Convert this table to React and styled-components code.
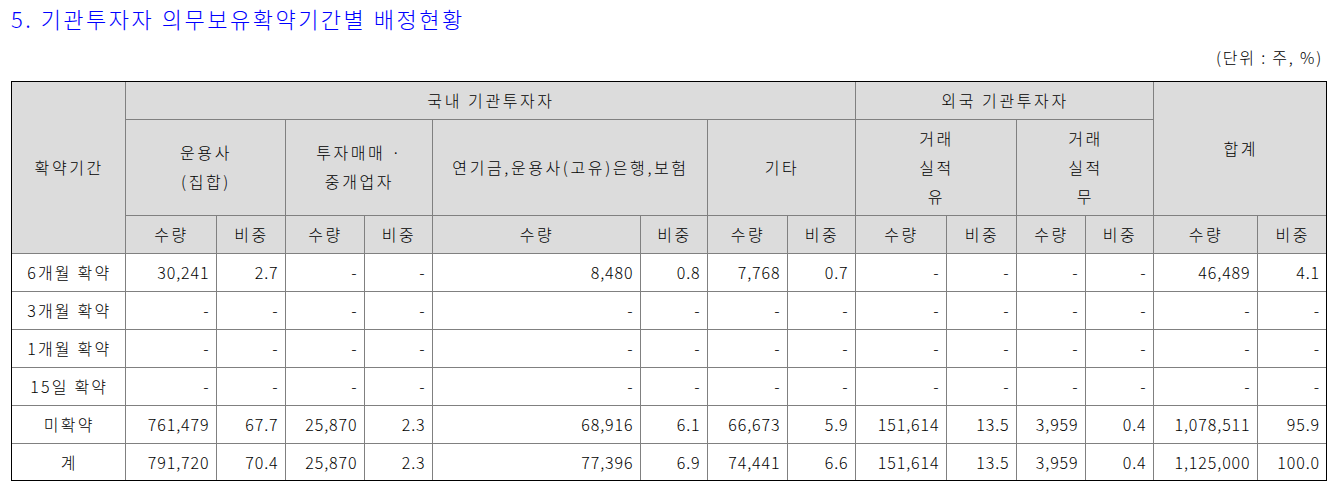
import React from "react";
import styled, { createGlobalStyle } from "styled-components";

const GlobalStyle = createGlobalStyle`
  body {
    margin: 0;
    background: #fff;
    font-family: "Noto Sans CJK KR", "Noto Sans", sans-serif;
    color: #000;
  }
`;

// 열 너비 (px)
const COLS = [113, 91, 69, 79, 68, 208, 67, 80, 68, 91, 70, 69, 68, 104, 69];

const ROWS = [
  ["6개월 확약", "30,241", "2.7", "-", "-", "8,480", "0.8", "7,768", "0.7", "-", "-", "-", "-", "46,489", "4.1"],
  ["3개월 확약", "-", "-", "-", "-", "-", "-", "-", "-", "-", "-", "-", "-", "-", "-"],
  ["1개월 확약", "-", "-", "-", "-", "-", "-", "-", "-", "-", "-", "-", "-", "-", "-"],
  ["15일 확약", "-", "-", "-", "-", "-", "-", "-", "-", "-", "-", "-", "-", "-", "-"],
  ["미확약", "761,479", "67.7", "25,870", "2.3", "68,916", "6.1", "66,673", "5.9", "151,614", "13.5", "3,959", "0.4", "1,078,511", "95.9"],
  ["계", "791,720", "70.4", "25,870", "2.3", "77,396", "6.9", "74,441", "6.6", "151,614", "13.5", "3,959", "0.4", "1,125,000", "100.0"],
];

const SUB_GROUPS = [
  ["운용사", "(집합)"],
  ["투자매매 ·", "중개업자"],
  ["연기금,운용사(고유)은행,보험"],
  ["기타"],
  ["거래", "실적", "유"],
  ["거래", "실적", "무"],
];

const App = () => {
  return (
    <Page>
      <GlobalStyle />
      <Title>5. 기관투자자 의무보유확약기간별 배정현황</Title>
      <Unit>(단위 : 주, %)</Unit>
      <TableBox>
        <Table>
          <colgroup>
            {COLS.map((w, i) => (
              <col key={i} style={{ width: w }} />
            ))}
          </colgroup>
          <thead>
            <HeadRow $h={37}>
              <HeadCell rowSpan={3}>확약기간</HeadCell>
              <HeadCell colSpan={8}>국내 기관투자자</HeadCell>
              <HeadCell colSpan={4}>외국 기관투자자</HeadCell>
              <HeadCell colSpan={2} rowSpan={2}>
                합계
              </HeadCell>
            </HeadRow>
            <HeadRow $h={96}>
              {SUB_GROUPS.map((lines, i) => (
                <HeadCell key={i} colSpan={2} $multi>
                  {lines.map((l, j) => (
                    <React.Fragment key={j}>
                      {j > 0 && <br />}
                      {l}
                    </React.Fragment>
                  ))}
                </HeadCell>
              ))}
            </HeadRow>
            <HeadRow $h={38}>
              {Array.from({ length: 7 }).map((_, i) => (
                <React.Fragment key={i}>
                  <HeadCell>수량</HeadCell>
                  <HeadCell>비중</HeadCell>
                </React.Fragment>
              ))}
            </HeadRow>
          </thead>
          <tbody>
            {ROWS.map((row, r) => (
              <BodyRow key={r} $h={r === ROWS.length - 1 ? 37 : 38}>
                {row.map((v, c) =>
                  c === 0 ? (
                    <LabelCell key={c}>{v}</LabelCell>
                  ) : (
                    <NumCell key={c}>{v}</NumCell>
                  )
                )}
              </BodyRow>
            ))}
          </tbody>
        </Table>
      </TableBox>
    </Page>
  );
};

export default App;

//스타일 영역
const Page = styled.div`
  width: 1316px;
  padding: 4px 0 0 11px;
`;

const Title = styled.h1`
  margin: 0;
  font-size: 22px;
  line-height: 28px;
  font-weight: 300;
  letter-spacing: 2.5px;
  color: #0000ff;
`;

const Unit = styled.div`
  margin-top: 14px;
  padding-right: 4px;
  text-align: right;
  font-size: 16px;
  line-height: 22px;
  font-weight: 300;
  letter-spacing: 1.8px;
`;

// 바깥 테두리만 검정
const TableBox = styled.div`
  margin-top: 13px;
  border: 1px solid #000;
`;

const Table = styled.table`
  width: 1314px;
  table-layout: fixed;
  border-collapse: collapse;
  border-style: hidden;
  font-size: 16px;
  font-weight: 300;
`;

const HeadRow = styled.tr`
  height: ${(p) => p.$h}px;
`;

const BodyRow = styled.tr`
  height: ${(p) => p.$h}px;
`;

// 한글 헤더는 자간을 넓게
const HeadCell = styled.th`
  border: 1px solid #808080;
  background-color: #dcdcdc;
  font-weight: 300;
  text-align: center;
  padding: 0 0 0 2px;
  letter-spacing: 2.6px;
  line-height: ${(p) => (p.$multi ? "29px" : "20px")};
  white-space: nowrap;
`;

const LabelCell = styled.td`
  border: 1px solid #808080;
  text-align: center;
  padding: 0 0 0 2px;
  letter-spacing: 2.2px;
  line-height: 20px;
  white-space: nowrap;
`;

const NumCell = styled.td`
  border: 1px solid #808080;
  text-align: right;
  padding: 0 6px 0 2px;
  letter-spacing: 0.9px;
  line-height: 20px;
  white-space: nowrap;
`;
